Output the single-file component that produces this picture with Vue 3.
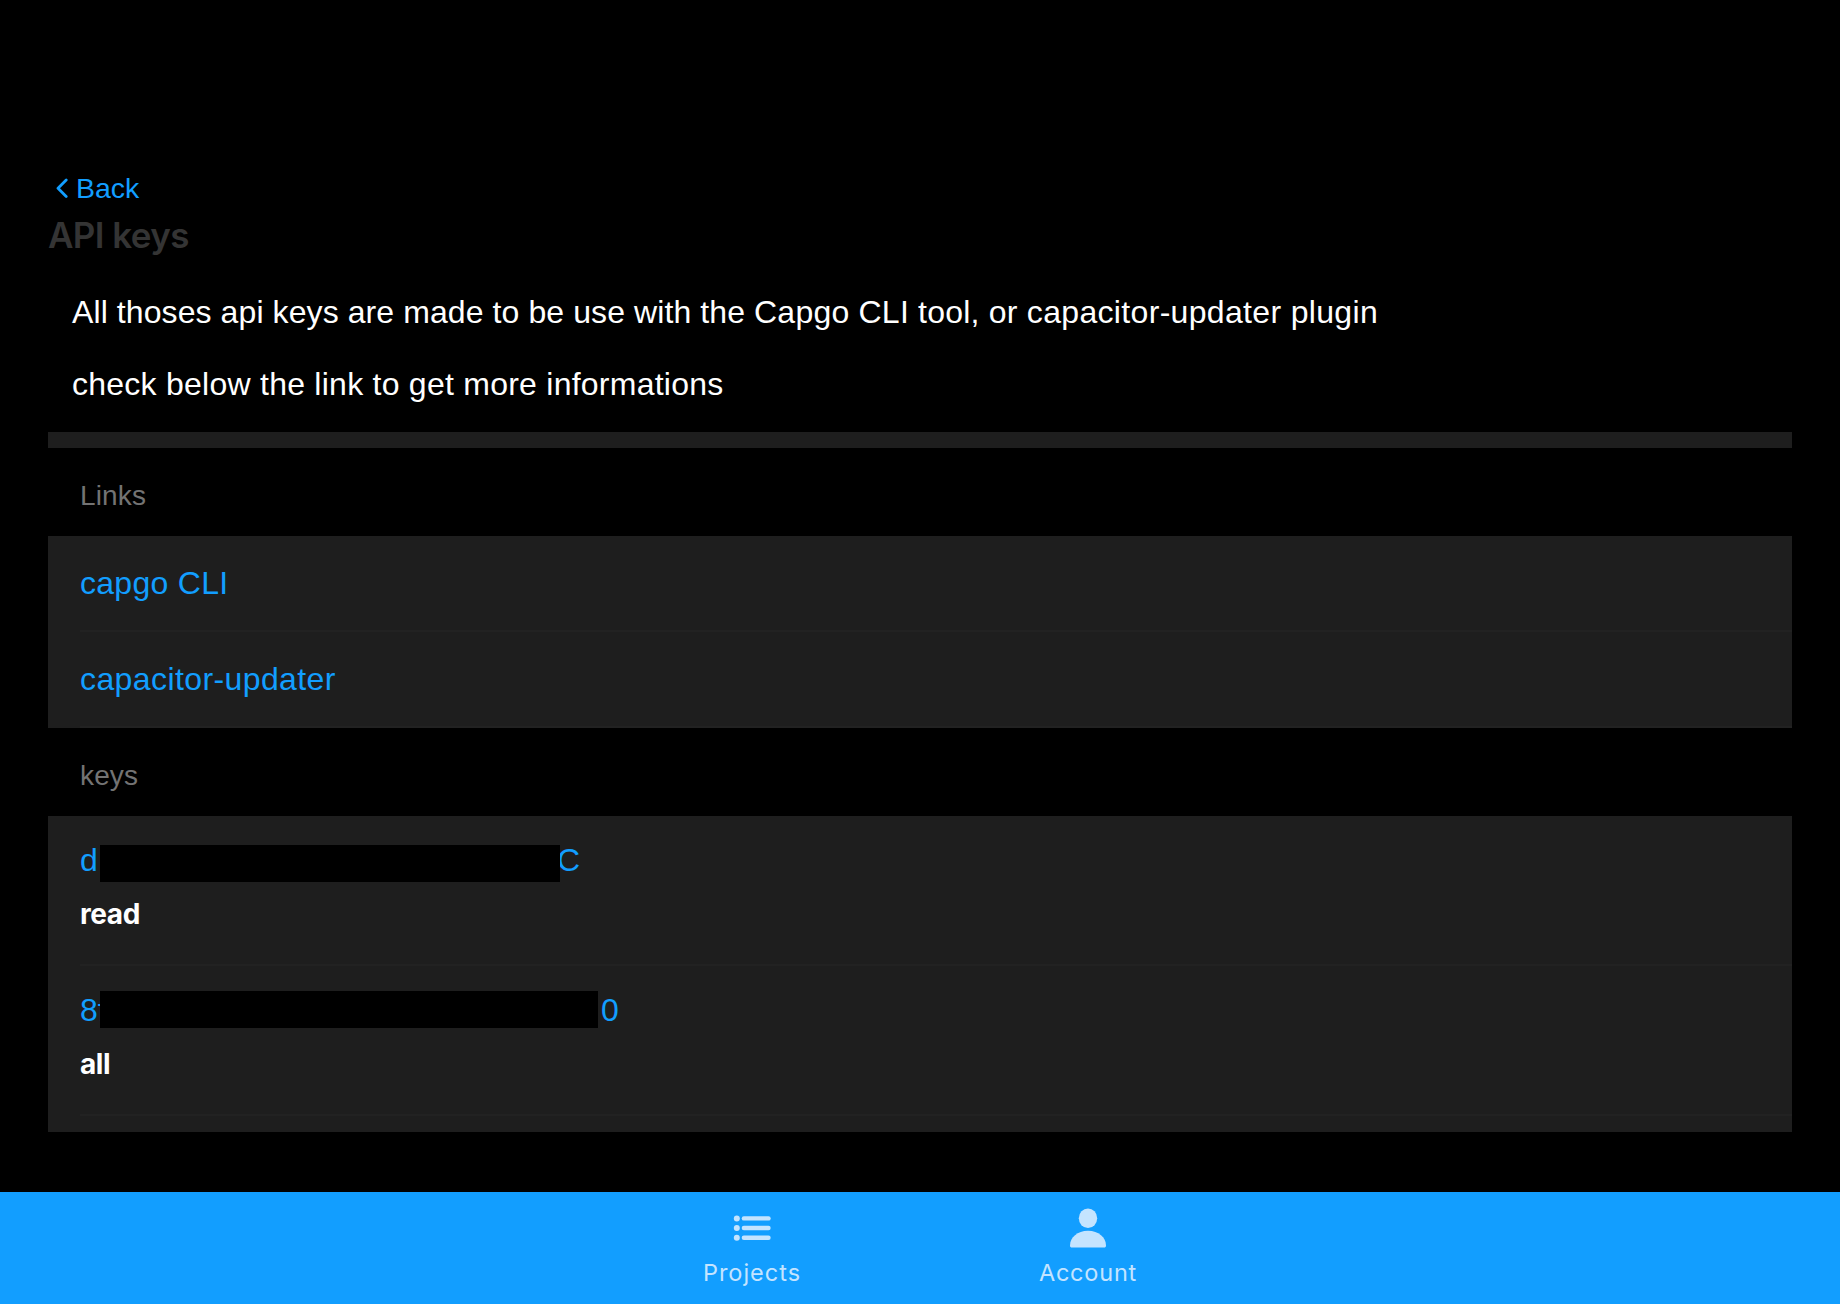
<script setup>
const links = [
  { text: 'capgo CLI', name: 'cli' },
  { text: 'capacitor-updater', name: 'updater' },
]
const keys = [
  { start: 'd', end: 'C', mask: 460, type: 'read', row: 'first' },
  { start: '8f', end: '0', mask: 498, type: 'all', row: 'second' },
]
</script>

<template>
  <div class="page">
    <main class="content">
      <a class="back">
        <svg width="12" height="20" viewBox="0 0 12 20"><path d="M10.200 2 2 10.200l8.200 8.200" /></svg>
        <span>Back</span>
      </a>
      <h1>API keys</h1>
      <div class="intro">
        <p class="usage">All thoses api keys are made to be use with the <span class="tool">Capgo CLI tool, or </span><span class="plugin">capacitor-updater plugin</span></p>
        <p class="more">check below the link to get more informations</p>
      </div>
      <div class="strip"></div>
      <h2>Links</h2>
      <ul class="list">
        <li v-for="l in links" :key="l.name" class="link" :class="l.name">{{ l.text }}</li>
      </ul>
      <h2>keys</h2>
      <ul class="list keys">
        <li v-for="k in keys" :key="k.type" class="key" :class="k.row">
          <div class="value">
            <span class="start">{{ k.start }}</span>
            <i class="mask" :style="{ width: k.mask + 'px' }"></i>
            <span class="end">{{ k.end }}</span>
          </div>
          <strong>{{ k.type }}</strong>
        </li>
      </ul>
    </main>
    <nav class="tabs">
      <a class="tab projects">
        <svg width="40" height="40" viewBox="0 0 40 40">
          <circle cx="4.8" cy="10.4" r="3" /><circle cx="4.8" cy="20" r="3" /><circle cx="4.8" cy="29.7" r="3" />
          <rect x="9.7" y="8.2" width="29" height="4.4" rx="2.2" />
          <rect x="9.7" y="17.8" width="29" height="4.4" rx="2.2" />
          <rect x="9.7" y="27.5" width="29" height="4.4" rx="2.2" />
        </svg>
        <span>Projects</span>
      </a>
      <a class="tab account">
        <svg width="40" height="40" viewBox="0 0 40 40">
          <ellipse cx="20" cy="10.2" rx="9.2" ry="9.8" />
          <path d="M4 39.600C2.600 39.600 2 38.800 2 37.400C2 29.500 9.500 22.700 20 22.700S38 29.500 38 37.400C38 38.800 37.400 39.600 36 39.600Z" />
        </svg>
        <span>Account</span>
      </a>
    </nav>
  </div>
</template>

<style>
body {
  margin: 0;
  background: #000;
}
</style>

<style scoped>
.page {
  width: 1840px;
  height: 1304px;
  display: flex;
  flex-direction: column;
  background: #000;
  overflow: hidden;
  font-family: "Liberation Sans", Arial, sans-serif;
  color: #fff;
}
.content {
  flex: 1;
  padding: 168px 48px 0;
}
.back {
  display: flex;
  align-items: center;
  height: 40px;
  padding-left: 8px;
  gap: 8px;
  color: #129eff;
  font-size: 28.5px;
  line-height: 40px;
}
.back svg {
  fill: none;
  stroke: #129eff;
  stroke-width: 2.8;
  stroke-linecap: round;
  stroke-linejoin: round;
}
h1 {
  margin: 0;
  height: 56px;
  font: 600 35px/54px Inter, sans-serif;
  letter-spacing: -0.6px;
  color: #343434;
}
.intro {
  padding: 12px 24px 0;
  height: 156px;
}
p {
  margin: 0;
  height: 72px;
  font-size: 32px;
  line-height: 72px;
}
.usage {
  letter-spacing: 0.09px;
}
.tool {
  letter-spacing: 0.22px;
}
.plugin {
  letter-spacing: 0.33px;
}
.more {
  letter-spacing: 0.25px;
}
.strip {
  height: 16px;
  background: #1e1e1e;
}
h2 {
  margin: 0;
  height: 88px;
  padding-left: 32px;
  font-size: 28px;
  font-weight: 400;
  line-height: 95px;
  letter-spacing: 0.15px;
  color: #737373;
}
.list {
  margin: 0;
  padding: 0 0 0 32px;
  list-style: none;
  background: #1e1e1e;
}
li {
  box-sizing: border-box;
  border-bottom: 2px solid #222;
}
.link {
  height: 96px;
  font-size: 32px;
  line-height: 95px;
  color: #129eff;
}
.cli {
  letter-spacing: 0.28px;
}
.updater {
  letter-spacing: 0.4px;
}
.keys {
  padding-bottom: 16px;
}
.key {
  height: 150px;
  padding-top: 26px;
}
.value {
  display: flex;
  align-items: flex-start;
  height: 54px;
  font-size: 32px;
  line-height: 37px;
  color: #129eff;
}
.start {
  width: 20px;
  white-space: nowrap;
}
.mask {
  position: relative;
  flex: none;
  height: 37px;
  margin-top: 3px;
  background: #000;
}
.end {
  margin-left: -3px;
}
.second .end {
  margin-left: 3px;
}
.second .mask {
  margin-top: -1px;
}
.first .mask {
  z-index: 1;
}
strong {
  display: block;
  font: 700 28px/36px Inter, sans-serif;
  letter-spacing: -0.4px;
}
.tabs {
  height: 112px;
  display: flex;
  justify-content: center;
  background: #129eff;
}
.tab {
  width: 336px;
  display: flex;
  flex-direction: column;
  align-items: center;
  padding-top: 16px;
  font: 400 23.5px/30px Inter, sans-serif;
  letter-spacing: 1px;
  color: #c4e4ff;
}
.account {
  letter-spacing: 0.8px;
}
.tab svg {
  fill: #c4e4ff;
  margin-bottom: 10px;
}
</style>
